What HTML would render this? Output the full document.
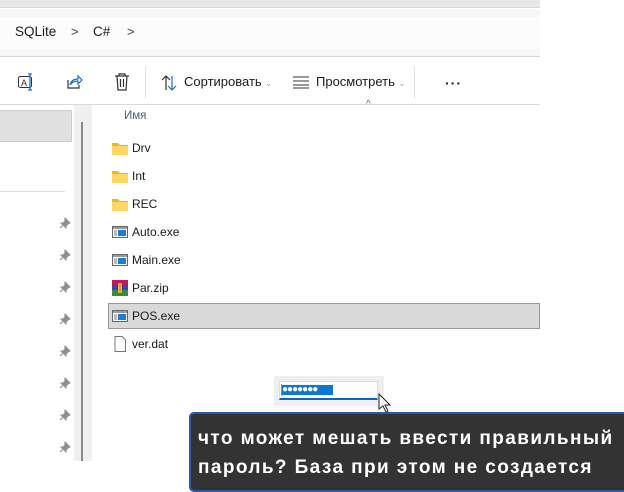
<!DOCTYPE html>
<html><head><meta charset="utf-8"><style>
*{margin:0;padding:0;box-sizing:border-box}
body{width:624px;height:487px;background:#fff;position:relative;overflow:hidden;font-family:"Segoe UI","Liberation Sans","DejaVu Sans",sans-serif;color:#1a1a1a}
.a{position:absolute}
.row{position:absolute;left:108px;width:432px;height:26px;font-size:12px;line-height:26px}
.row span{position:absolute;left:24px}
.ic{position:absolute;left:4px;top:6px}
.pin{position:absolute;left:59px;width:12px;height:12px}
</style></head><body>
<div class="a" style="left:0;top:0;width:540px;height:8px;background:#e6e6e6;border-bottom:1px solid #d9d9d9"></div>
<div class="a" style="left:0;top:9px;width:540px;height:48px;background:#f7f7f7;border-bottom:1px solid #d6d6d6"></div>
<div class="a" style="left:0;top:17px;width:540px;height:32px;background:#fcfcfc"></div>
<div class="a" style="left:15px;top:24px;font-size:13.5px">SQLite</div>
<div class="a" style="left:71px;top:24px;font-size:13px;color:#444">&gt;</div>
<div class="a" style="left:93px;top:24px;font-size:13.5px">C#</div>
<div class="a" style="left:127px;top:24px;font-size:13px;color:#444">&gt;</div>
<!-- toolbar -->
<svg class="a" style="left:17px;top:73px" width="20" height="18" viewBox="0 0 20 18"><rect x="1.5" y="3.5" width="13" height="11" rx="2" fill="none" stroke="#333"/><text x="4" y="13" font-size="9" font-family="Liberation Sans" fill="#333">A</text><path d="M13 1v16M11 1h4M11 17h4" stroke="#1a6fd1" stroke-width="1.3"/></svg>
<svg class="a" style="left:65px;top:73px" width="18" height="18" viewBox="0 0 18 18"><path d="M3 7v8h11v-3" fill="none" stroke="#333" stroke-width="1.2"/><path d="M5 12c1-4 4-6 8-6V3l4 4-4 4V8c-3 0-6 1-8 4z" fill="none" stroke="#1a6fd1" stroke-width="1.2"/></svg>
<svg class="a" style="left:113px;top:72px" width="18" height="20" viewBox="0 0 18 20"><path d="M2 4h14M6 4V2h6v2M4 4l1 14h8l1-14M7.5 7v8M10.5 7v8" fill="none" stroke="#333" stroke-width="1.2"/></svg>
<div class="a" style="left:145px;top:66px;width:1px;height:32px;background:#e0e0e0"></div>
<svg class="a" style="left:160px;top:74px" width="20" height="18" viewBox="0 0 20 18"><path d="M6 16V2M2 6l4-4 4 4" fill="none" stroke="#333" stroke-width="1.2"/><path d="M12 2v14M8 12l4 4 4-4" fill="none" stroke="#1a6fd1" stroke-width="1.2"/></svg>
<div class="a" style="left:184px;top:74px;font-size:13px">Сортировать <span style="font-size:8px;color:#999">&#8964;</span></div>
<svg class="a" style="left:292px;top:75px" width="18" height="14"><path d="M1 2h16M1 6h16M1 10h16M1 13h16" stroke="#333" stroke-width="1"/></svg>
<div class="a" style="left:316px;top:74px;font-size:13px">Просмотреть <span style="font-size:8px;color:#999">&#8964;</span></div>
<div class="a" style="left:414px;top:66px;width:1px;height:32px;background:#e0e0e0"></div>
<div class="a" style="left:445px;top:75px;font-size:14px;letter-spacing:1px;font-weight:bold">&middot;&middot;&middot;</div>
<div class="a" style="left:0;top:104px;width:540px;height:1px;background:#d9d9d9"></div>
<div class="a" style="left:366px;top:99px;font-size:10px;color:#666">^</div>
<!-- left pane -->
<div class="a" style="left:0;top:110px;width:72px;height:32px;background:#e0e0e0;border:1px solid #ccc;border-left:none"></div>
<div class="a" style="left:0;top:191px;width:65px;height:1px;background:#e0e0e0"></div>
<div class="a" style="left:74px;top:105px;width:17px;height:356px;background:#f0f0f0"></div>
<div class="a" style="left:81px;top:122px;width:2px;height:339px;background:#8a8a8a"></div>
<div class="a" style="left:91px;top:105px;width:1px;height:356px;background:#f3f3f3"></div>
<div class="a" style="left:124px;top:110px;font-size:11.5px;color:#4a5f7a">Имя</div>
<!-- pins -->
<svg width="0" height="0" style="position:absolute"><defs><symbol id="p" viewBox="0 0 12 12"><path d="M6 1l5 5-2 1-2 2 0 2-5-5 2 0 2-2z M4 8l-3 3" fill="#8a9099" stroke="#8a9099" stroke-width="1"/></symbol></defs></svg>
<svg class="pin" style="top:217px"><use href="#p"/></svg>
<svg class="pin" style="top:249px"><use href="#p"/></svg>
<svg class="pin" style="top:281px"><use href="#p"/></svg>
<svg class="pin" style="top:313px"><use href="#p"/></svg>
<svg class="pin" style="top:345px"><use href="#p"/></svg>
<svg class="pin" style="top:377px"><use href="#p"/></svg>
<svg class="pin" style="top:409px"><use href="#p"/></svg>
<svg class="pin" style="top:441px"><use href="#p"/></svg>
<!-- files -->
<svg width="0" height="0" style="position:absolute"><defs>
<symbol id="f" viewBox="0 0 16 14"><path d="M0 2h6l2 2h8v10H0z" fill="#f0b429"/><path d="M0 5h16v9H0z" fill="#ffd766"/></symbol>
<symbol id="e" viewBox="0 0 16 14"><rect x="0.5" y="1.5" width="15" height="11" fill="#fff" stroke="#666"/><rect x="1" y="2" width="14" height="2" fill="#999"/><rect x="6" y="5" width="8" height="6" fill="#1a7fd4"/><rect x="2" y="5" width="3" height="6" fill="#bbb"/></symbol>
</defs></svg>
<div class="row" style="top:135px"><svg class="ic" width="16" height="14"><use href="#f"/></svg><span>Drv</span></div>
<div class="row" style="top:163px"><svg class="ic" width="16" height="14"><use href="#f"/></svg><span>Int</span></div>
<div class="row" style="top:191px"><svg class="ic" width="16" height="14"><use href="#f"/></svg><span>REC</span></div>
<div class="row" style="top:219px"><svg class="ic" width="16" height="14"><use href="#e"/></svg><span>Auto.exe</span></div>
<div class="row" style="top:247px"><svg class="ic" width="16" height="14"><use href="#e"/></svg><span>Main.exe</span></div>
<div class="row" style="top:275px"><svg class="ic" width="16" height="16" viewBox="0 0 16 16" style="top:5px"><rect x="0" y="0" width="16" height="5" fill="#c2185b"/><rect x="0" y="5" width="16" height="5" fill="#3949ab"/><rect x="0" y="10" width="16" height="6" fill="#388e3c"/><rect x="6" y="3" width="4" height="10" fill="#e8a33d"/></svg><span>Par.zip</span></div>
<div class="row" style="top:303px;background:#d9d9d9;border:1px solid #999;height:26px;line-height:24px"><svg class="ic" width="16" height="14" style="top:5px;left:3px"><use href="#e"/></svg><span style="left:23px">POS.exe</span></div>
<div class="row" style="top:331px"><svg class="ic" width="16" height="16" viewBox="0 0 16 16" style="top:5px"><path d="M3 .5h7l3.5 3.5v11.5h-10.5z" fill="#fff" stroke="#777"/></svg><span>ver.dat</span></div>
<!-- password -->
<div class="a" style="left:274px;top:376px;width:110px;height:30px;background:#efefef"></div>
<div class="a" style="left:279px;top:381px;width:99px;height:19px;background:#fff;border:1px solid #ddd;border-bottom:2px solid #0a64c8"></div>
<div class="a" style="left:282px;top:385px;width:51px;height:10px;background:#0a78d7;color:#fff;font-size:10px;line-height:10px;letter-spacing:-1px;overflow:hidden">&#9679;&#9679;&#9679;&#9679;&#9679;&#9679;&#9679;</div>
<div class="a" style="left:281px;top:384px;width:1px;height:12px;background:#e07b00"></div>
<svg class="a" style="left:378px;top:393px" width="14" height="20" viewBox="0 0 14 20"><path d="M1 1v15l4-3 3 6 2-1-3-6h5z" fill="#fff" stroke="#222"/></svg>
<!-- tooltip -->
<div class="a" style="left:189px;top:412px;width:440px;height:80px;background:#333;border:2px solid #2b58a8;border-radius:5px"></div>
<div class="a" style="left:198px;top:424px;font-size:19px;font-weight:bold;color:#fff;line-height:29px;font-family:'Liberation Sans',sans-serif;letter-spacing:1.4px;white-space:nowrap">что может мешать ввести правильный<br>пароль? База при этом не создается</div>
</body></html>
